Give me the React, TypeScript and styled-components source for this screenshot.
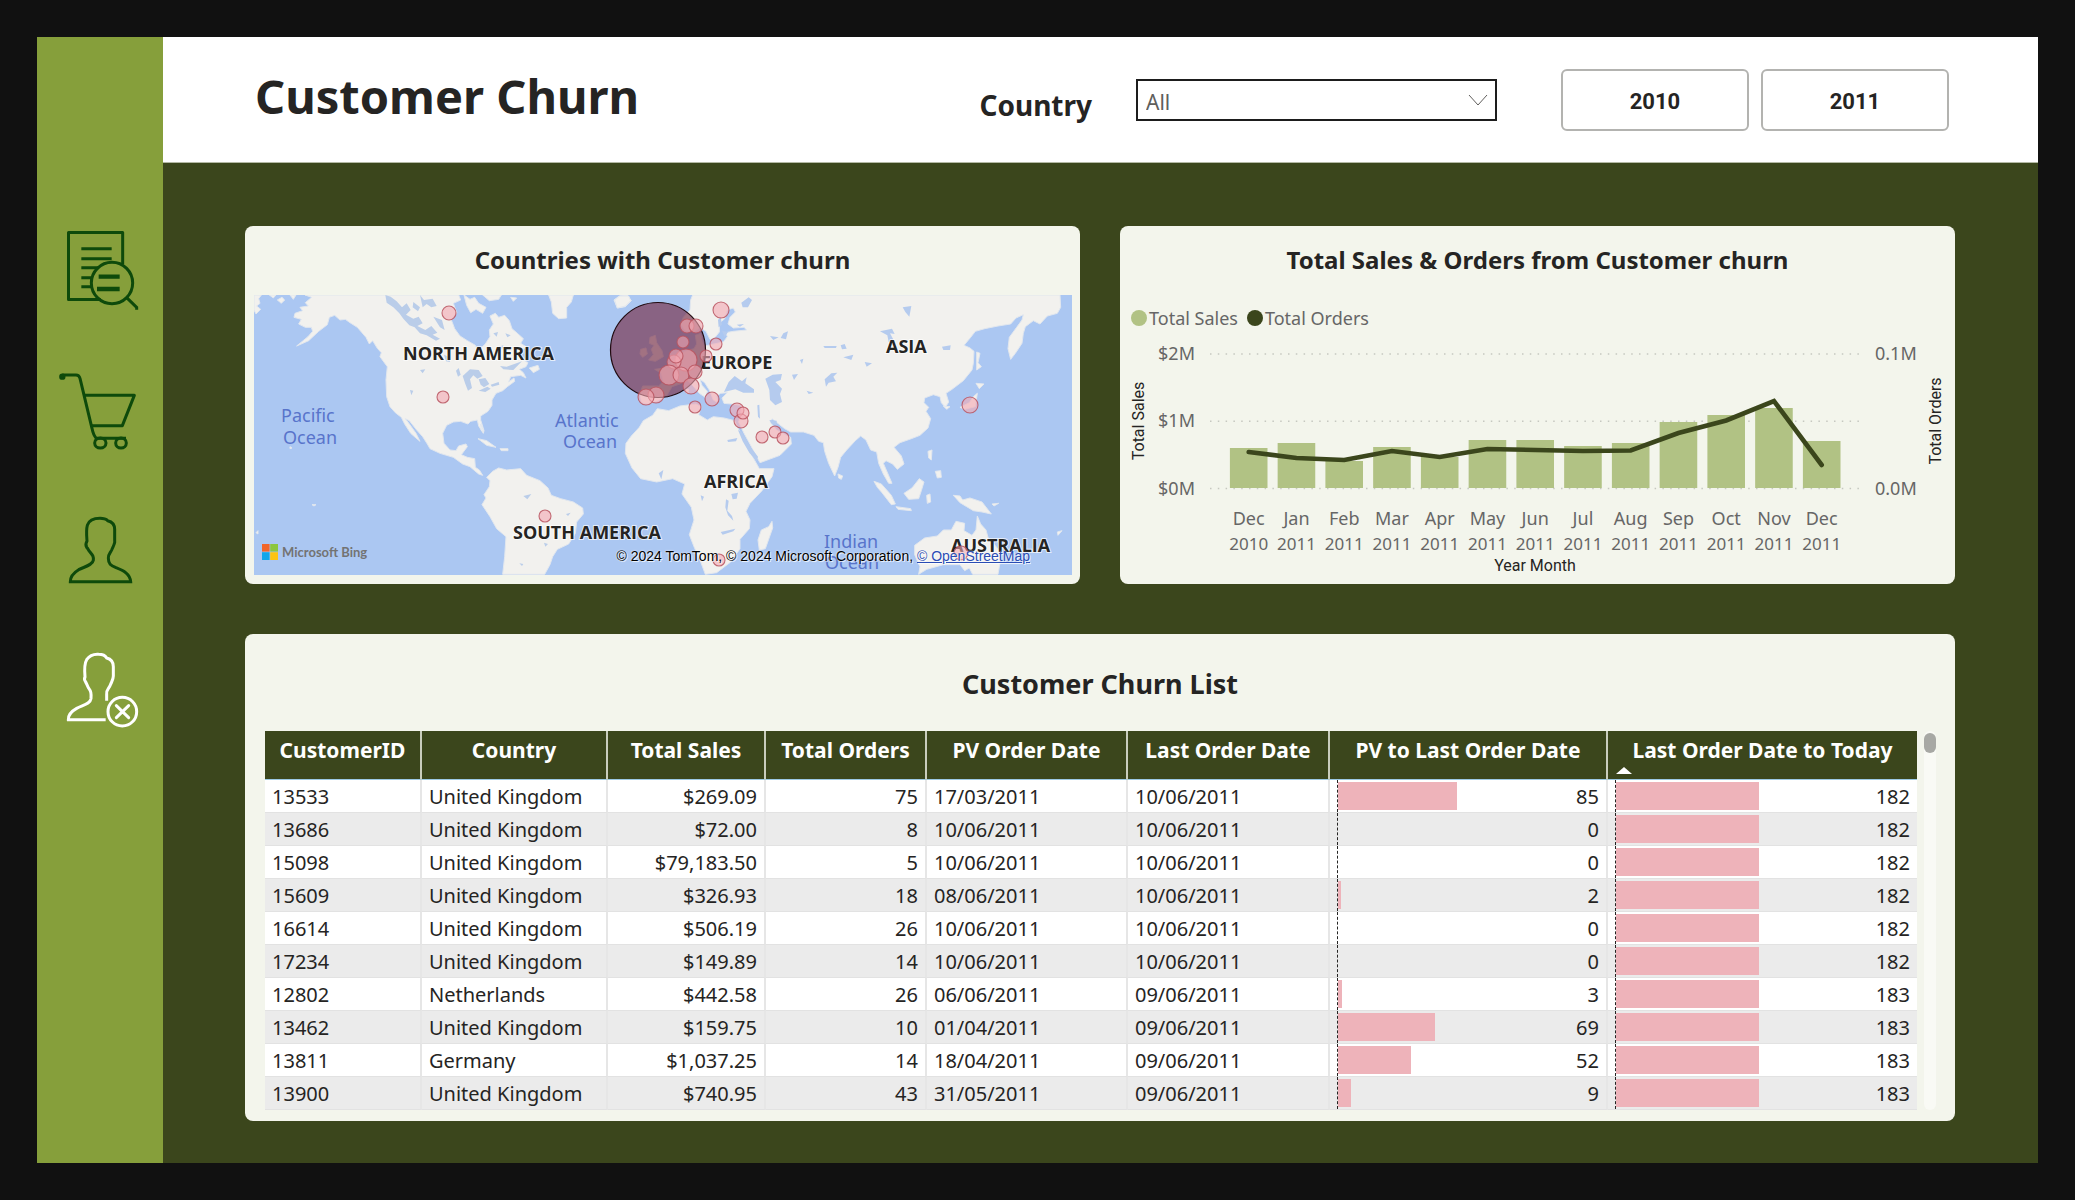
import React from "react";
import styled, { createGlobalStyle } from "styled-components";

const sans = `"Noto Sans", "Open Sans", sans-serif`;
const din = `Roboto, "Liberation Sans", sans-serif`;

const color = {
  backdrop: "#111111",
  leaf: "#869f3b",
  moss: "#3b461c",
  pine: "#0e4a0b",
  card: "#f3f5ec",
  ink: "#252423",
  muted: "#666666",
  bar: "#b1c284",
  pink: "#eeb3ba",
};

const GlobalStyle = createGlobalStyle`
  *, *::before, *::after { box-sizing: border-box; }
  body { margin: 0; background: ${color.backdrop}; color: ${color.ink}; font-family: ${sans}; }
`;

const Page = styled.div`
  padding: 37px;
`;

const Report = styled.div`
  display: grid;
  grid-template-columns: 126px minmax(0, 1fr);
`;

const Sidebar = styled.nav`
  display: flex;
  flex-direction: column;
  align-items: center;
  gap: 56px;
  padding-top: 191px;
  background: ${color.leaf};
`;

const NavLink = styled.a<{ $active?: boolean }>`
  display: block;
  width: 84px;
  height: 84px;
  color: ${(p) => (p.$active ? "#ffffff" : color.pine)};
`;

const NavIcon = styled.svg`
  display: block;
  width: 100%;
  height: 100%;
  fill: none;
  stroke: currentColor;
  stroke-width: 9;
`;

const Body = styled.div`
  background: ${color.moss};
`;

const Header = styled.header`
  display: flex;
  align-items: center;
  justify-content: space-between;
  height: 126px;
  padding: 0 89px 0 92px;
  background: #ffffff;
  border-bottom: 1px solid #b3b9a4;
`;

const Title = styled.h1`
  margin: 0;
  padding-bottom: 8px;
  font-size: 47px;
  line-height: 60px;
  font-weight: 700;
`;

const Filters = styled.div`
  display: flex;
  align-items: center;
`;

const FilterLabel = styled.label`
  margin-right: 44px;
  padding-top: 10px;
  font-size: 28px;
  line-height: 36px;
  font-weight: 700;
`;

const SelectBox = styled.div`
  display: grid;
  align-items: center;
  width: 361px;
  margin-right: 64px;
`;

const Select = styled.select`
  grid-area: 1 / 1;
  appearance: none;
  height: 42px;
  padding: 4px 8px 0;
  border: 2px solid #1d1d1d;
  border-radius: 0;
  background: #ffffff;
  color: #605e5c;
  font-family: ${sans};
  font-size: 21px;
`;

const Chevron = styled.svg`
  grid-area: 1 / 1;
  justify-self: end;
  width: 20px;
  height: 12px;
  margin-right: 9px;
  fill: none;
  stroke: #605e5c;
  pointer-events: none;
`;

const Years = styled.div`
  display: flex;
  gap: 12px;
`;

const YearButton = styled.button`
  width: 188px;
  height: 62px;
  padding: 3px 0 0;
  border: 2px solid #b3b3b0;
  border-radius: 6px;
  background: #ffffff;
  color: ${color.ink};
  font-family: ${din};
  font-size: 22px;
  font-weight: 700;
`;

const Main = styled.main`
  display: grid;
  grid-template-columns: repeat(2, minmax(0, 1fr));
  gap: 50px 40px;
  padding: 63px 83px 42px 82px;
`;

const Card = styled.section<{ $wide?: boolean }>`
  grid-column: ${(p) => (p.$wide ? "1 / -1" : "auto")};
  overflow: hidden;
  border-radius: 8px;
  background: ${color.card};
`;

const CardTitle = styled.h2<{ $large?: boolean }>`
  margin: 0;
  padding: ${(p) => (p.$large ? "2px 0 0" : "0 0 2px")};
  font-size: ${(p) => (p.$large ? 27 : 24)}px;
  line-height: ${(p) => (p.$large ? 95 : 67)}px;
  font-weight: 700;
  text-align: center;
`;

/* ---------- map ---------- */

const MapFrame = styled.div`
  position: relative;
  margin: 0 8px 9px 9px;
`;

const MapSvg = styled.svg`
  display: block;
  width: 100%;
  background: #abc7f2;
`;

const Continent = styled.text`
  font-family: "Open Sans", ${sans};
  font-size: 18px;
  font-weight: 700;
  fill: #252423;
  stroke: rgba(255, 255, 255, 0.7);
  stroke-width: 2px;
  paint-order: stroke;
`;

const Ocean = styled.text`
  font-family: ${sans};
  font-size: 18px;
  fill: #5874cb;
`;

const Bing = styled.div`
  position: absolute;
  left: 8px;
  bottom: 13px;
  display: flex;
  align-items: center;
  gap: 4px;
  color: #737373;
  font-family: Lato, ${sans};
  font-size: 13px;
  font-weight: 700;
  line-height: 20px;
`;

const BingLogo = styled.svg`
  width: 16px;
  height: 16px;
`;

const Credits = styled.div`
  position: absolute;
  right: 42px;
  bottom: 9px;
  color: #000000;
  font-family: "Liberation Sans", Arial, sans-serif;
  font-size: 14px;
  line-height: 20px;
  text-shadow: 0 0 2px #ffffff, 1px 1px 0 rgba(255, 255, 255, 0.7);
  a { color: #2a4cb4; }
`;

type Bubble = [x: number, y: number, r: number];

const bubbles: Bubble[] = [
  [195, 18, 7], [189, 102, 6], [291, 221, 6],
  [467, 15, 8], [433, 31, 7], [442, 31, 7], [429, 47, 6], [462, 49, 6], [452, 61, 6],
  [432, 65, 11], [420, 67, 7], [422, 61, 7], [415, 80, 10], [427, 80, 8], [441, 77, 7],
  [437, 91, 8], [402, 100, 8], [392, 102, 8], [458, 104, 7], [441, 112, 6],
  [483, 115, 7], [487, 126, 7], [489, 118, 6], [508, 142, 6], [521, 137, 6], [529, 143, 6],
  [716, 110, 8], [465, 265, 6], [707, 258, 7],
];

const continents: [string, number, number][] = [
  ["NORTH AMERICA", 149, 65], ["SOUTH AMERICA", 259, 244], ["EUROPE", 447, 74],
  ["ASIA", 632, 58], ["AFRICA", 450, 193], ["AUSTRALIA", 697, 257],
];

const oceans: [string, number, number][] = [
  ["Pacific", 27, 127], ["Ocean", 29, 149], ["Atlantic", 301, 132], ["Ocean", 309, 153],
  ["Indian", 570, 253], ["Ocean", 571, 274],
];

const landWest = [
  "M42,225L64,225 56,236 60,250 50,258 62,268 48,282 42,270ZM88,225L108,225 100,234ZM112,240L126,232 134,240 124,250ZM150,225L168,225 160,238Z",
  "M195,225L215,232 196,248 205,258 180,262 188,272 165,280 162,292 184,298 176,312 196,322 214,322 218,334 204,350 170,378 206,362 236,334 262,314 268,292 284,286 300,300 316,298 330,308 352,322 366,338 378,352 388,372 398,362 412,385 424,398 420,410 436,432 442,440 438,480 440,530 450,560 466,578 484,592 494,612 512,640 528,654 540,664 528,640 508,612 496,596 508,602 530,630 548,650 562,672 570,686 600,700 640,712 668,732 690,740 704,752 716,762 728,766 718,750 706,742 704,716 682,712 664,704 682,680 678,672 656,678 648,692 630,690 612,670 608,640 620,616 640,606 662,604 684,612 692,604 712,600 716,618 730,640 732,632 722,600 722,588 744,574 756,556 756,540 768,520 788,512 802,500 824,484 822,474 806,486 812,470 842,466 858,474 850,458 838,448 858,440 864,428 842,416 830,404 858,380 842,370 850,356 832,340 816,326 808,302 794,286 776,292 766,280 750,288 760,312 748,330 750,350 736,372 714,392 706,376 682,362 660,348 644,326 634,300 650,278 640,250 662,240 656,225Z",
  "M672,225L690,238 704,232 716,250 738,262 728,280 708,268 692,278 680,256ZM728,225L784,225 776,238 748,242ZM812,232L830,234 820,244ZM868,444L894,436 898,448 880,458ZM926,225L1000,225 994,246 980,262 980,294 956,296 938,280 934,246ZM1122,240L1138,228 1162,226 1174,242 1156,260 1132,264Z",
  "M714,656L740,662 768,682 740,676ZM780,686L804,686 804,692 784,692ZM722,612L730,632 724,632Z",
  "M740,772L758,754 776,744 800,750 842,746 860,766 900,782 924,804 934,826 962,836 1000,846 1028,864 1030,882 1010,906 1006,940 986,972 952,988 938,1010 930,1034 914,1063 788,1063 794,1010 798,950 770,926 750,890 726,854 738,834 732,824 748,800 750,782Z",
  "M150,680L156,684 150,686ZM216,854L228,854 222,858ZM48,938L54,932 54,942Z",
];

const waterWest =
  "M436,225L452,230 470,244 486,262 500,250 512,270 498,284 520,296 536,290 548,310 532,318 556,330 574,318 592,338 578,344 600,356 588,362 560,346 540,340 524,322 508,316 490,296 478,280 460,262 440,248ZM540,225L552,240 578,236 590,258 574,262 560,252 548,262ZM580,290L606,300 614,330 600,322ZM520,246L540,262 534,274 518,262Z" +
  "M668,468L690,448 716,450 728,468 712,476 700,466 690,478 696,504 684,512 676,492ZM716,478L736,474 748,492 732,502 722,494ZM716,512L742,500 752,506 736,516ZM752,494L776,486 778,494 756,500ZM648,452L656,444 662,464 654,470ZM612,404L626,410 630,426 618,424ZM510,510L520,512 514,526ZM540,450L556,448 548,460ZM850,828L874,822 862,838ZM978,882L992,878 984,888ZM912,968L924,972 916,980ZM838,1030L850,1032 846,1038Z" +
  "M760,340L774,336 770,350ZM776,380L790,376 786,388ZM796,340L812,346 802,352ZM780,438L800,440 846,424 820,450 790,448Z";

const landEast = [
  "M74,240L90,228 116,228 122,242 106,258 82,264Z",
  "M180,352L196,346 200,368 216,392 220,410 196,424 176,420 190,404 184,388 192,376 178,370ZM152,388L168,384 172,402 158,412 150,402Z",
  "M154,548L150,520 158,498 206,498 220,484 214,460 194,448 222,444 238,428 256,420 274,400 290,392 312,386 320,372 316,346 332,340 336,360 344,378 372,372 400,366 412,350 408,338 430,334 470,330 462,322 430,324 414,312 420,292 436,276 430,264 412,270 404,296 388,310 388,336 372,356 360,358 348,334 330,322 312,336 284,330 272,312 280,292 300,270 302,240 308,225 1410,225 1412,262 1402,280 1372,288 1350,312 1330,302 1306,320 1300,340 1296,370 1276,400 1262,418 1254,386 1258,352 1280,322 1296,300 1300,284 1278,294 1262,312 1224,318 1184,326 1156,334 1142,352 1122,376 1140,384 1152,394 1150,430 1146,450 1120,482 1086,508 1068,520 1076,546 1066,562 1054,548 1050,530 1030,524 1004,534 1002,548 1016,562 1008,574 1022,596 1014,624 990,646 964,656 930,668 912,682 934,708 942,732 922,748 908,732 888,722 880,730 894,762 906,790 896,790 880,762 866,730 860,696 842,690 828,660 812,648 796,662 770,690 752,712 744,742 734,768 716,730 704,694 700,668 686,664 672,646 640,636 602,636 584,626 556,604 546,596 540,606 560,630 578,640 602,652 604,672 570,706 510,728 500,710 484,680 462,640 446,606 452,584 454,556 424,552 402,550 396,534 412,518 392,520 380,528 384,548 370,540 358,510 344,488 330,478 336,496 352,514 346,532 328,520 306,494 290,480 270,492 246,500 232,524 206,542 172,552Z",
  "M106,700L108,670 124,648 148,622 160,602 188,586 202,566 236,572 270,558 318,552 334,560 326,584 352,600 370,590 402,594 434,602 442,620 462,660 478,692 498,728 508,746 552,746 546,770 516,812 480,850 468,874 480,900 478,926 450,958 450,986 422,1026 380,1058 346,1063 330,1020 312,980 298,944 312,900 304,862 276,822 284,792 248,776 200,786 152,776 126,744Z",
  "M508,990L504,960 514,930 536,920 546,904 548,924 526,986ZM744,762L758,768 754,778 746,774Z",
  "M852,784L874,792 904,826 916,852 904,854 876,818 862,802ZM918,860L962,866 964,872 924,868ZM942,820L966,804 988,776 1002,786 994,812 986,836 956,838ZM1014,694L1026,690 1024,720 1016,714ZM1036,754L1052,752 1054,772 1042,774ZM1010,826L1020,822 1022,846 1012,850Z",
  "M1090,826L1110,828 1118,840 1140,834 1176,846 1204,882 1176,876 1150,872 1130,860 1110,848ZM1206,852L1226,850 1212,858ZM1160,396L1170,400 1164,428 1174,440 1160,450ZM1158,490L1182,492 1168,506ZM1150,530L1162,520 1156,560 1124,568 1110,562 1138,548ZM1060,558L1080,560 1070,568Z",
  "M974,976L1004,954 1042,948 1060,930 1084,930 1098,904 1124,910 1122,932 1146,946 1158,930 1162,888 1172,912 1188,930 1194,952 1220,982 1234,1004 1224,1063 1148,1063 1138,1044 1124,1052 1110,1034 1060,1034 1010,1048 986,1063 990,1040 974,1004ZM1402,936L1416,932 1404,946ZM288,508L296,508 294,520 288,518Z",
];

const waterEast =
  "M402,516L416,486 434,468 456,484 470,472 466,490 492,508 492,518 460,518 436,508ZM526,476L548,464 576,462 572,480 556,486 576,506 570,522 576,546 556,556 540,540 538,510ZM454,248L476,232 486,240 474,262 458,262Z" +
  "M704,478L724,460 742,458 730,470 738,484 716,488 708,500ZM606,464L624,462 612,480ZM938,262L964,258 958,290 946,276ZM870,334L906,326 914,342 900,340 914,366 896,366 892,346ZM1056,380L1082,376 1080,390 1060,390ZM700,378L740,378 738,384 704,384ZM752,376L764,372 770,386 756,388ZM580,340L594,334 588,358 572,354ZM540,348L566,352 550,360Z" +
  "M760,412L790,404 784,420ZM824,426L846,430 830,440ZM650,512L670,518 656,522ZM502,556L508,554 510,596 504,590ZM412,660L442,654 438,664 414,666ZM424,822L444,818 440,836 428,838ZM408,838L416,842 412,872 426,888 430,902 414,886 406,862ZM332,826L342,830 336,844ZM392,936L436,926 430,934 398,944ZM206,760L220,750 214,778Z" +
  "M384,300L392,290 396,314 386,322ZM396,332L414,336 404,352ZM440,314L462,312 450,320ZM444,630L456,636 484,684 504,710 500,724 478,698 458,664ZM538,600L560,602 560,616 546,612ZM630,420L640,416 636,432Z";

function WorldMap() {
  return (
    <MapFrame>
      <MapSvg viewBox="0 0 818 280" role="img" aria-label="World map of customer churn by country">
        <g transform="translate(-14 -75) scale(0.33333)" strokeLinejoin="round">
          {landWest.map((d) => <path key={d} d={d} fill="#f2f1ee" stroke="#e2e7ee" strokeWidth="3" />)}
          <path d={waterWest} fill="#bacde9" />
        </g>
        <g transform="translate(336 -75) scale(0.33333)" strokeLinejoin="round">
          {landEast.map((d) => <path key={d} d={d} fill="#f2f1ee" stroke="#e2e7ee" strokeWidth="3" />)}
          <path d={waterEast} fill="#b5cbee" />
        </g>
        {continents.map(([name, x, y]) => <Continent key={name} x={x} y={y}>{name}</Continent>)}
        {oceans.map(([name, x, y]) => <Ocean key={`${x}-${y}`} x={x} y={y}>{name}</Ocean>)}
        <circle cx="404" cy="55" r="47.5" fill="#752a45" fillOpacity="0.64" stroke="#210a10" strokeWidth="1.2" />
        {bubbles.map(([x, y, r]) => (
          <circle key={`${x}-${y}`} cx={x} cy={y} r={r} fill="#f3a9b3" fillOpacity="0.6" stroke="#b9545f" strokeOpacity="0.85" strokeWidth="1.1" />
        ))}
      </MapSvg>
      <Bing>
        <BingLogo viewBox="0 0 16 16" aria-hidden="true">
          <path d="M0 0h7.6v7.6H0z" fill="#f1652a" />
          <path d="M8.2 0H16v7.6H8.2z" fill="#8cc63e" />
          <path d="M0 8.2h7.6V16H0z" fill="#12a6ea" />
          <path d="M8.2 8.2H16V16H8.2z" fill="#fcc410" />
        </BingLogo>
        Microsoft Bing
      </Bing>
      <Credits>
        © 2024 TomTom, © 2024 Microsoft Corporation, <a href="#osm">© OpenStreetMap</a>
      </Credits>
    </MapFrame>
  );
}

/* ---------- combo chart ---------- */

const Legend = styled.ul`
  display: flex;
  gap: 9px;
  margin: 0;
  padding: 11px 0 4px 11px;
  list-style: none;
  color: ${color.muted};
  font-size: 18px;
  line-height: 24px;
`;

const LegendItem = styled.li<{ $dot: string }>`
  display: flex;
  align-items: center;
  gap: 2px;
  &::before {
    content: "";
    width: 16px;
    height: 16px;
    border-radius: 50%;
    background: ${(p) => p.$dot};
  }
`;

const ChartSvg = styled.svg`
  display: block;
  width: 100%;
`;

const Tick = styled.text<{ $small?: boolean }>`
  font-family: ${sans};
  font-size: ${(p) => (p.$small ? 17 : 18)}px;
  fill: ${color.muted};
`;

const AxisTitle = styled.text`
  font-family: ${din};
  font-size: 16px;
  fill: ${color.ink};
  text-anchor: middle;
`;

const months = [
  { month: "Dec", year: 2010, bar: 40, line: 118 },
  { month: "Jan", year: 2011, bar: 45, line: 124 },
  { month: "Feb", year: 2011, bar: 27, line: 126 },
  { month: "Mar", year: 2011, bar: 41, line: 117 },
  { month: "Apr", year: 2011, bar: 31, line: 123 },
  { month: "May", year: 2011, bar: 48, line: 115 },
  { month: "Jun", year: 2011, bar: 48, line: 116 },
  { month: "Jul", year: 2011, bar: 42, line: 117 },
  { month: "Aug", year: 2011, bar: 45, line: 116.5 },
  { month: "Sep", year: 2011, bar: 66, line: 99 },
  { month: "Oct", year: 2011, bar: 73, line: 86.5 },
  { month: "Nov", year: 2011, bar: 80, line: 67 },
  { month: "Dec", year: 2011, bar: 47, line: 131 },
];

const centre = (i: number) => 128.7 + i * 47.75;

function ComboChart() {
  return (
    <>
      <Legend>
        <LegendItem $dot={color.bar}>Total Sales</LegendItem>
        <LegendItem $dot={color.moss}>Total Orders</LegendItem>
      </Legend>
      <ChartSvg viewBox="0 0 835 250" role="img" aria-label="Total sales and orders by month">
        {[20, 87.3, 154.6].map((y) => (
          <line key={y} x1="90" x2="743" y1={y} y2={y} stroke="#c6c8c0" strokeWidth="1.5" strokeDasharray="1.5 6.3" />
        ))}
        <Tick x="75" y="26" textAnchor="end">$2M</Tick>
        <Tick x="75" y="93" textAnchor="end">$1M</Tick>
        <Tick x="75" y="161" textAnchor="end">$0M</Tick>
        <Tick x="755" y="26">0.1M</Tick>
        <Tick x="755" y="161">0.0M</Tick>
        {months.map((m, i) => (
          <g key={`${m.month}${m.year}`}>
            <rect x={centre(i) - 18.8} y={154 - m.bar} width="37.6" height={m.bar} fill={color.bar} />
            <Tick x={centre(i)} y="191" textAnchor="middle">{m.month}</Tick>
            <Tick $small x={centre(i)} y="216" textAnchor="middle">{m.year}</Tick>
          </g>
        ))}
        <polyline
          points={months.map((m, i) => `${centre(i)},${m.line}`).join(" ")}
          fill="none"
          stroke={color.moss}
          strokeWidth="4.6"
          strokeLinecap="round"
          strokeLinejoin="miter"
        />
        <AxisTitle x="415" y="237">Year Month</AxisTitle>
        <AxisTitle transform="translate(24 87) rotate(-90)">Total Sales</AxisTitle>
        <AxisTitle transform="translate(821 87) rotate(-90)">Total Orders</AxisTitle>
      </ChartSvg>
    </>
  );
}

/* ---------- churn table ---------- */

const TableArea = styled.div`
  display: flex;
  gap: 7px;
  padding: 0 19px 11px 20px;
`;

const Table = styled.table`
  flex: 1;
  height: 379px;
  border-collapse: separate;
  border-spacing: 0;
  table-layout: fixed;
  font-size: 20px;
  line-height: 28px;
`;

const Th = styled.th`
  height: 49px;
  padding: 0;
  vertical-align: top;
  border-right: 2px solid #c9cdbd;
  border-bottom: 1px solid #9cc9e4;
  background: ${color.moss};
  color: #ffffff;
  font-size: 21px;
  line-height: 38px;
  font-weight: 700;
  white-space: nowrap;
  &:last-child { border-right: 0; }
`;

const SortArrow = styled.span`
  display: block;
  width: 0;
  margin: -2px 0 0 8px;
  border: solid transparent;
  border-width: 0 8px 7px;
  border-bottom-color: #ffffff;
`;

const Row = styled.tr`
  background: #ffffff;
  &:nth-child(even) { background: #ebebeb; }
`;

const Td = styled.td<{ $right?: boolean; $bar?: boolean }>`
  padding: ${(p) => (p.$bar ? "0" : "2px")} 7px 0;
  border-right: 2px solid #e6e6e6;
  border-bottom: 1px solid #e2e2e2;
  text-align: ${(p) => (p.$right ? "right" : "left")};
  white-space: nowrap;
  &:last-child { border-right: 0; }
`;

const BarCell = styled.div`
  display: flex;
  align-items: center;
  justify-content: space-between;
  height: 32px;
  border-left: 1px dashed #252423;
`;

const DataBar = styled.div`
  height: 28px;
  background: ${color.pink};
`;

const BarNumber = styled.span`
  padding-top: 2px;
`;

const ScrollTrack = styled.div`
  width: 12px;
  border-radius: 6px;
  background: #f9faf5;
`;

const ScrollThumb = styled.div`
  height: 20px;
  margin-top: 2px;
  border-radius: 6px;
  background: #a7a8a4;
`;

const columns: [string, number][] = [
  ["CustomerID", 157], ["Country", 186], ["Total Sales", 158], ["Total Orders", 161],
  ["PV Order Date", 201], ["Last Order Date", 202], ["PV to Last Order Date", 278],
  ["Last Order Date to Today", 309],
];

type Customer = [string, string, string, number, string, string, number, number];

const customers: Customer[] = [
  ["13533", "United Kingdom", "$269.09", 75, "17/03/2011", "10/06/2011", 85, 182],
  ["13686", "United Kingdom", "$72.00", 8, "10/06/2011", "10/06/2011", 0, 182],
  ["15098", "United Kingdom", "$79,183.50", 5, "10/06/2011", "10/06/2011", 0, 182],
  ["15609", "United Kingdom", "$326.93", 18, "08/06/2011", "10/06/2011", 2, 182],
  ["16614", "United Kingdom", "$506.19", 26, "10/06/2011", "10/06/2011", 0, 182],
  ["17234", "United Kingdom", "$149.89", 14, "10/06/2011", "10/06/2011", 0, 182],
  ["12802", "Netherlands", "$442.58", 26, "06/06/2011", "09/06/2011", 3, 183],
  ["13462", "United Kingdom", "$159.75", 10, "01/04/2011", "09/06/2011", 69, 183],
  ["13811", "Germany", "$1,037.25", 14, "18/04/2011", "09/06/2011", 52, 183],
  ["13900", "United Kingdom", "$740.95", 43, "31/05/2011", "09/06/2011", 9, 183],
];

function BarValue({ value, max }: { value: number; max: number }) {
  return (
    <BarCell>
      <DataBar style={{ width: `${(value / max) * 100}%` }} />
      <BarNumber>{value}</BarNumber>
    </BarCell>
  );
}

function ChurnTable() {
  return (
    <TableArea>
      <Table>
        <colgroup>
          {columns.map(([name, width]) => <col key={name} style={{ width: `${(width / 1652) * 100}%` }} />)}
        </colgroup>
        <thead>
          <tr>
            {columns.map(([name], i) => {
              const sorted = i === columns.length - 1;
              return (
                <Th key={name} scope="col" aria-sort={sorted ? "ascending" : undefined}>
                  {name}
                  {sorted && <SortArrow />}
                </Th>
              );
            })}
          </tr>
        </thead>
        <tbody>
          {customers.map(([id, country, sales, orders, pv, last, pvDays, days]) => (
            <Row key={id}>
              <Td>{id}</Td>
              <Td>{country}</Td>
              <Td $right>{sales}</Td>
              <Td $right>{orders}</Td>
              <Td>{pv}</Td>
              <Td>{last}</Td>
              <Td $bar><BarValue value={pvDays} max={186} /></Td>
              <Td $bar><BarValue value={days} max={375} /></Td>
            </Row>
          ))}
        </tbody>
      </Table>
      <ScrollTrack>
        <ScrollThumb />
      </ScrollTrack>
    </TableArea>
  );
}

/* ---------- page ---------- */

function Navigation() {
  return (
    <Sidebar aria-label="Report pages">
      <NavLink href="#overview" aria-label="Sales overview">
        <NavIcon viewBox="84 54 252 252">
          <path d="M278 162V67.500H115.500V268.500H212" strokeLinejoin="round" />
          <path d="M154 116H245M154 146H245M154 173H206M154 203H184M154 230H184" />
          <circle cx="246" cy="219" r="62" />
          <path d="M206 200H269M201 237H269" strokeWidth="13" />
          <path d="M290 263L320 292V299" />
        </NavIcon>
      </NavLink>
      <NavLink href="#products" aria-label="Products">
        <NavIcon viewBox="84 474 252 252" strokeLinejoin="round">
          <path d="M97 495H138Q147 495 150 505L186 655Q190 676 199 685H288" />
          <circle cx="97" cy="500" r="5" />
          <path d="M163 556H313L277 647H186" />
          <ellipse cx="211" cy="699" rx="17" ry="15" />
          <ellipse cx="273" cy="699" rx="16" ry="15" />
        </NavIcon>
      </NavLink>
      <NavLink href="#customers" aria-label="Customers">
        <NavIcon viewBox="84 54 252 252">
          <path d="M121 275C121 258 131 248 146 239C164 230 188 225 190 211C191 200 189 197 180 186C174 179 175 177 170 172C166 165 168 158 171 153C170 140 168 120 172 106C177 91 193 85 210 85C221 85 229 88 233 92C246 95 254 104 254 118V150C254 154 255 157 253 161C251 168 248 172 245 180C241 189 234 194 235 204C235 222 242 226 258 233C281 242 300 251 302 275Z" />
        </NavIcon>
      </NavLink>
      <NavLink href="#churn" aria-label="Customer churn" aria-current="page" $active>
        <NavIcon viewBox="84 474 252 252">
          <path d="M227 689H115C114 673 124 664 140 655C158 645 181 642 183 626C184 609 183 604 175 593C171 585 168 577 166 574C162 569 162 567 165 561C163 538 162 522 170 509C179 496 193 492 206 493C218 493 226 497 230 504C246 508 250 518 250 530V558C250 568 246 573 241 585C237 596 228 600 230 612V632" />
          <circle cx="277" cy="665" r="43" />
          <path d="M259 647L296 683M296 647L259 683" strokeLinecap="round" />
        </NavIcon>
      </NavLink>
    </Sidebar>
  );
}

export default function App() {
  return (
    <Page>
      <GlobalStyle />
      <Report>
        <Navigation />
        <Body>
          <Header>
            <Title>Customer Churn</Title>
            <Filters>
              <FilterLabel htmlFor="country">Country</FilterLabel>
              <SelectBox>
                <Select id="country" defaultValue="All">
                  <option>All</option>
                  <option>Germany</option>
                  <option>Netherlands</option>
                  <option>United Kingdom</option>
                </Select>
                <Chevron viewBox="0 0 20 12" aria-hidden="true">
                  <path d="M1 1L10 11L19 1" />
                </Chevron>
              </SelectBox>
              <Years>
                <YearButton type="button">2010</YearButton>
                <YearButton type="button">2011</YearButton>
              </Years>
            </Filters>
          </Header>
          <Main>
            <Card>
              <CardTitle>Countries with Customer churn</CardTitle>
              <WorldMap />
            </Card>
            <Card>
              <CardTitle>Total Sales &amp; Orders from Customer churn</CardTitle>
              <ComboChart />
            </Card>
            <Card $wide>
              <CardTitle $large>Customer Churn List</CardTitle>
              <ChurnTable />
            </Card>
          </Main>
        </Body>
      </Report>
    </Page>
  );
}
